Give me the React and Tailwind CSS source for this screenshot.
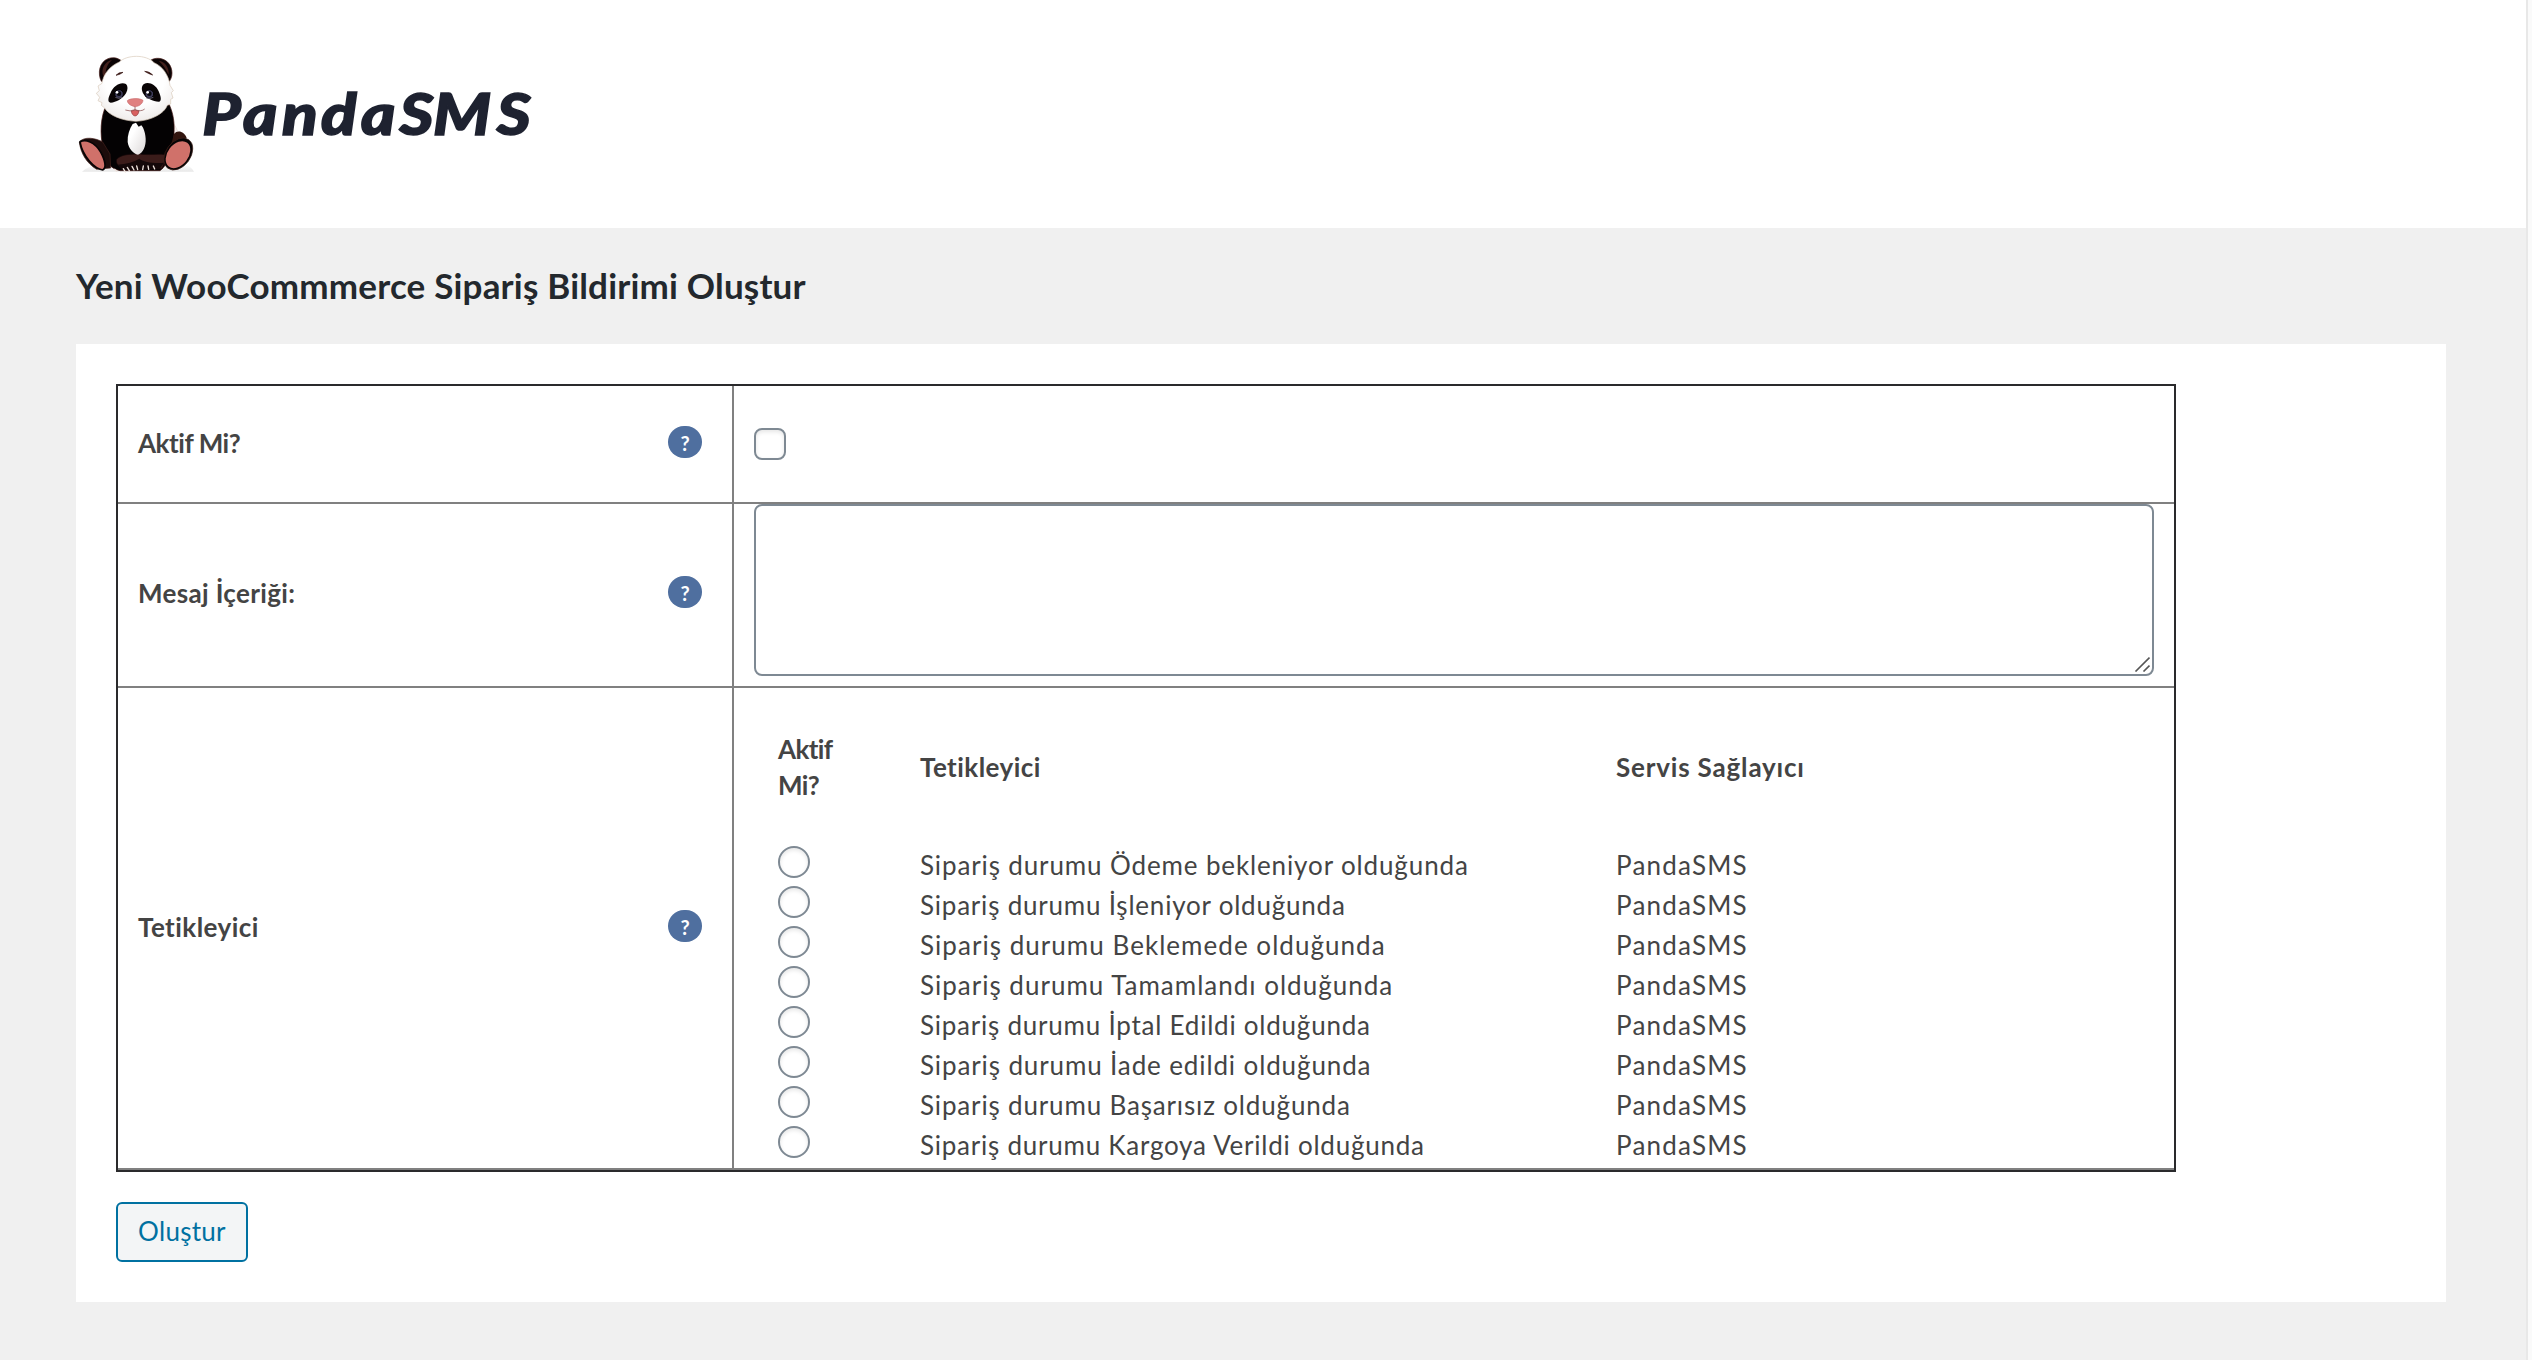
const triggers = [
  { label: 'Sipariş durumu Ödeme bekleniyor olduğunda', tracking: 'tracking-[0.872px]' },
  { label: 'Sipariş durumu İşleniyor olduğunda', tracking: 'tracking-[0.786px]' },
  { label: 'Sipariş durumu Beklemede olduğunda', tracking: 'tracking-[1.04px]' },
  { label: 'Sipariş durumu Tamamlandı olduğunda', tracking: 'tracking-[1.002px]' },
  { label: 'Sipariş durumu İptal Edildi olduğunda', tracking: 'tracking-[0.77px]' },
  { label: 'Sipariş durumu İade edildi olduğunda', tracking: 'tracking-[0.88px]' },
  { label: 'Sipariş durumu Başarısız olduğunda', tracking: 'tracking-[0.84px]' },
  { label: 'Sipariş durumu Kargoya Verildi olduğunda', tracking: 'tracking-[0.765px]' },
];

function Panda() {
  return (
    <svg className="h-[150px] w-[140px] shrink-0" viewBox="0 0 420 450" aria-hidden="true">
      <defs>
        <radialGradient id="face" cx="0.5" cy="0.35" r="0.7">
          <stop offset="0.55" stopColor="#ffffff" />
          <stop offset="1" stopColor="#ece8e6" />
        </radialGradient>
        <linearGradient id="belly" x1="0" y1="0" x2="1" y2="1">
          <stop offset="0.3" stopColor="#ffffff" />
          <stop offset="1" stopColor="#dcd8d8" />
        </linearGradient>
        <linearGradient id="ground" x1="0" y1="0" x2="0" y2="1">
          <stop offset="0" stopColor="#ffffff" />
          <stop offset="1" stopColor="#e8e8e8" />
        </linearGradient>
      </defs>
      <path d="M66 395 Q90 374 130 372 L370 372 Q396 380 402 395 Z" fill="url(#ground)" />
      {/* ears */}
      <path d="M124 124 C112 100 118 66 144 56 C162 49 182 56 188 68 C166 76 146 96 136 122 Z" fill="#0b0405" stroke="#4a1c1a" strokeWidth="2" />
      <path d="M130 108 C122 88 134 64 156 60 C140 74 136 90 138 106 Z" fill="#43201c" />
      <path d="M268 64 C282 50 312 52 326 70 C340 88 338 112 328 124 L318 120 C310 96 294 76 268 64 Z" fill="#0b0405" stroke="#4a1c1a" strokeWidth="2" />
      <path d="M296 62 C314 64 328 82 326 104 C318 88 310 74 296 62 Z" fill="#43201c" />
      {/* torso and arms */}
      <path d="M334 240 Q350 262 356 280 L336 284 Z" fill="#f4efed" stroke="#d9c9bd" />
      <path d="M134 206 C118 250 122 300 132 335 C140 370 152 386 180 392 L300 392 C326 374 342 322 342 282 C344 246 340 222 328 194 Z" fill="#040203" stroke="#40120f" strokeWidth="2" />
      {/* legs */}
      <path d="M58 306 C72 288 108 294 128 306 L150 342 L152 384 L110 388 C80 370 62 340 58 306 Z" fill="#1c0c0b" stroke="#45211c" strokeWidth="2" />
      <path d="M342 282 C352 268 374 274 380 294 L340 320 L326 340 Z" fill="#32150f" />
      <path d="M170 358 C185 340 218 344 238 341 C262 348 300 338 322 346 L306 386 L190 388 C176 380 166 370 170 358 Z" fill="#3b1c1a" stroke="#160607" strokeWidth="2" />
      <path d="M172 374 C200 372 222 366 238 356 C248 366 288 372 312 368 L298 388 L186 390 Z" fill="#140809" />
      {/* belly */}
      <path d="M218 252 C208 268 202 286 203 306 C206 326 220 342 234 344 C250 338 258 318 257 296 C256 278 250 262 244 256 L236 260 L228 248 Z" fill="url(#belly)" />
      {/* foot pads */}
      <path d="M60 306 C76 296 104 306 122 336 C136 362 140 384 128 390 C104 386 68 350 60 306 Z" fill="#d0716a" stroke="#080405" strokeWidth="5" />
      <ellipse cx="355" cy="342" rx="37" ry="53" transform="rotate(36 355 342)" fill="#060304" stroke="#3e1f1a" strokeWidth="2" />
      <ellipse cx="354" cy="344" rx="31" ry="45" transform="rotate(38 354 344)" fill="#d0716a" />
      {/* claws */}
      <path d="M190 386 l6 10 M202 382 l7 12 M216 379 l6 11 M230 378 l3 11 M250 378 l-2 11 M264 378 l2 10 M280 378 l4 9 M164 388 l6 6" stroke="#eee3dd" strokeWidth="4" strokeLinecap="round" />
      {/* head */}
      <path d="M178 66 C200 44 258 42 282 68 C306 78 326 104 330 136 L340 152 L334 158 L339 174 L332 178 L332 192 L322 196 C312 222 272 242 228 244 C186 242 146 226 134 204 L124 196 L126 188 L114 182 L119 172 L109 160 L118 152 L114 138 L126 130 C130 102 150 78 178 66 Z" fill="url(#face)" stroke="#d8c8b8" strokeWidth="2" />
      {/* brows */}
      <path d="M168 106 Q176 96 189 97 Q180 104 168 106 Z M254 94 Q268 94 278 105 Q266 102 254 94 Z" fill="#3a1714" stroke="#3a1714" strokeWidth="2" />
      {/* eye patches */}
      <path d="M198 132 C182 124 160 138 152 158 C144 174 142 186 152 188 C168 188 188 176 198 160 C204 148 204 138 198 132 Z" fill="#0a0506" />
      <path d="M252 132 C266 124 288 134 296 154 C302 168 306 182 298 185 C282 186 258 176 249 160 C244 148 244 138 252 132 Z" fill="#0a0506" />
      <circle cx="177" cy="162" r="13" fill="#3d3a58" stroke="#000000" strokeWidth="3" />
      <circle cx="268" cy="162" r="13" fill="#3d3a58" stroke="#000000" strokeWidth="3" />
      <circle cx="177" cy="161" r="7" fill="#07060c" />
      <circle cx="268" cy="161" r="7" fill="#07060c" />
      <circle cx="171" cy="157" r="4" fill="#ffffff" />
      <circle cx="263" cy="157" r="4" fill="#ffffff" />
      <path d="M166 172 Q176 178 188 172 M258 174 Q270 178 280 172" fill="none" stroke="#8b869c" strokeWidth="2" />
      {/* nose and mouth */}
      <path d="M202 182 C210 174 240 174 249 181 C248 192 236 199 226 200 C214 198 203 192 202 182 Z" fill="#e08180" stroke="#c86b6c" strokeWidth="2" />
      <path d="M225 200 L225 209 M196 210 Q210 216 225 209 Q244 216 254 207" fill="none" stroke="#7c3b3b" strokeWidth="2" />
      <path d="M214 213 Q225 208 237 213 C236 222 230 228 225 228 C219 227 214 220 214 213 Z" fill="#d9605f" stroke="#8e3a3b" strokeWidth="2" />
    </svg>
  );
}

function Logo() {
  return (
    <div className="flex">
      <Panda />
      <svg className="h-[150px] w-[340px]" viewBox="0 0 340 150" role="img" aria-label="PandaSMS">
        <text
          x="1.9 38 72.6 107 142.5 176.5 206.3 262.6"
          y="95"
          transform="scale(1.13 1)"
          className="fill-[#1e2230] stroke-[#1e2230] stroke-[1.5px] font-[Lato,sans-serif] text-[58px] font-black italic"
        >
          PandaSMS
        </text>
      </svg>
    </div>
  );
}

function HelpBadge() {
  return (
    <span className="flex h-8 w-[34px] items-center justify-center rounded-[16px] bg-[#4f6f9f] pt-0.5 text-[20px] leading-8 font-bold text-white">
      ?
    </span>
  );
}

function LabelCell({ children, tracking, padding }) {
  return (
    <div className={`flex w-[616px] shrink-0 items-center justify-between border-r-2 border-[#808080] pr-[30px] pl-5 ${padding}`}>
      <span className={`pt-0.5 leading-10 font-bold ${tracking}`}>{children}</span>
      <HelpBadge />
    </div>
  );
}

export default function App() {
  return (
    <div className="flex h-[1360px] w-[2532px] bg-[#f0f0f0] font-[Lato,sans-serif] text-[26px] text-[#444444]">
      <div className="flex min-w-0 flex-1 flex-col">
        <header className="h-[228px] bg-white pt-10 pl-[60px]">
          <Logo />
        </header>
        <main className="flex-1 pt-[33px] pr-20 pl-[76px]">
          <h1 className="text-[35px] leading-[48px] font-bold tracking-[0.19px] text-[#23282d]">
            Yeni WooCommmerce Sipariş Bildirimi Oluştur
          </h1>
          <section className="mt-[35px] h-[958px] bg-white p-10">
            <div className="w-[2060px] border-2 border-[#2a2a2c]">
              <div className="flex h-[118px] border-b-2 border-[#808080]">
                <LabelCell tracking="tracking-[-0.45px]" padding="pb-1">Aktif Mi?</LabelCell>
                <div className="flex items-center pl-5">
                  <input
                    type="checkbox"
                    className="size-8 appearance-none rounded-lg border-2 border-[#7e8993] bg-white shadow-[inset_0_2px_4px_rgba(0,0,0,0.1)]"
                  />
                </div>
              </div>
              <div className="flex h-[184px] border-b-2 border-[#808080]">
                <LabelCell tracking="tracking-[0.35px]" padding="pb-1.5">Mesaj İçeriği:</LabelCell>
                <div className="pl-5">
                  <div className="relative h-[172px] w-[1400px]">
                    <textarea className="block h-full w-full resize-none rounded-lg border-2 border-[#7e8993] bg-white" />
                    <svg className="absolute right-1 bottom-1 size-4" viewBox="0 0 16 16" fill="none" stroke="#555555" strokeWidth="1.6">
                      <path d="M1.5 15.5 L15.5 1.5 M9.5 15.5 L15.5 9.5" />
                    </svg>
                  </div>
                </div>
              </div>
              <div className="flex h-[482px] border-b-2 border-[#808080]">
                <LabelCell tracking="tracking-[0.45px]" padding="pb-1">Tetikleyici</LabelCell>
                <div className="pt-[43px] pl-11">
                  <div className="grid grid-cols-[142px_696px_auto] items-center leading-9 font-bold">
                    <span className="tracking-[-0.6px]">
                      Aktif
                      <br />
                      Mi?
                    </span>
                    <span className="tracking-[0.45px]">Tetikleyici</span>
                    <span className="tracking-[0.82px]">Servis Sağlayıcı</span>
                  </div>
                  <div className="mt-[41px]">
                    {triggers.map((t) => (
                      <div key={t.label} className="grid h-10 grid-cols-[142px_696px_auto] leading-[42px]">
                        <span className="flex pt-0.5">
                          <input
                            type="radio"
                            name="trigger"
                            className="size-8 appearance-none rounded-full border-2 border-[#7e8993] bg-white shadow-[inset_0_2px_4px_rgba(0,0,0,0.1)]"
                          />
                        </span>
                        <span className={t.tracking}>{t.label}</span>
                        <span className="tracking-[1.2px]">PandaSMS</span>
                      </div>
                    ))}
                  </div>
                </div>
              </div>
            </div>
            <button className="mt-[30px] h-[60px] w-[132px] rounded-md border-2 border-[#0071a1] bg-[#f3f5f6] pb-0.5 tracking-[0.288px] text-[#0071a1]">
              Oluştur
            </button>
          </section>
        </main>
      </div>
      <div className="w-1.5 border-l-2 border-[#e8e8e8] bg-[#fafafa]" />
    </div>
  );
}
